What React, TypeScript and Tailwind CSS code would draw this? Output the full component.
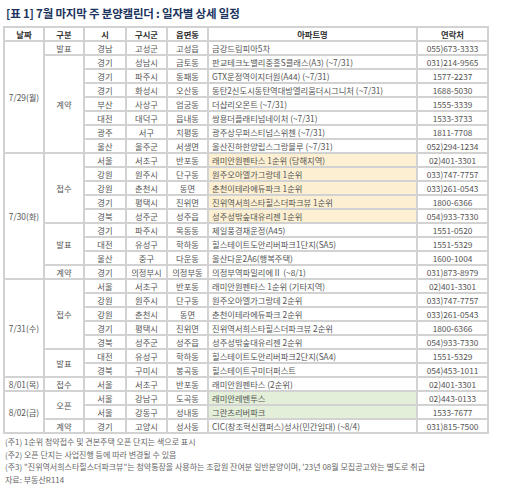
import React from 'react';

type Row = {
  si: string;
  gu: string;
  dong: string;
  apt: string;
  tel: string;
  hl?: 'y' | 'g';
};

type Group = { kind: string; rows: Row[] };
type Day = { date: string; groups: Group[] };

const DAYS: Day[] = [
  {
    date: '7/29(월)',
    groups: [
      { kind: '발표', rows: [{ si: '경남', gu: '고성군', dong: '고성읍', apt: '금강드림피아5차', tel: '055)673-3333' }] },
      {
        kind: '계약',
        rows: [
          { si: '경기', gu: '성남시', dong: '금토동', apt: '판교테크노밸리중흥S클래스(A3) (~7/31)', tel: '031)214-9565' },
          { si: '경기', gu: '파주시', dong: '동패동', apt: 'GTX운정역이지더원(A44) (~7/31)', tel: '1577-2237' },
          { si: '경기', gu: '화성시', dong: '오산동', apt: '동탄2신도시동탄역대방엘리움더시그니처 (~7/31)', tel: '1688-5030' },
          { si: '부산', gu: '사상구', dong: '엄궁동', apt: '더샵리오몬트 (~7/31)', tel: '1555-3339' },
          { si: '대전', gu: '대덕구', dong: '읍내동', apt: '쌍용더플래티넘네이처 (~7/31)', tel: '1533-3733' },
          { si: '광주', gu: '서구', dong: '치평동', apt: '광주상무퍼스티넘스위첸 (~7/31)', tel: '1811-7708' },
          { si: '울산', gu: '울주군', dong: '서생면', apt: '울산진하한양립스그랑블루 (~7/31)', tel: '052)294-1234' },
        ],
      },
    ],
  },
  {
    date: '7/30(화)',
    groups: [
      {
        kind: '접수',
        rows: [
          { si: '서울', gu: '서초구', dong: '반포동', apt: '래미안원펜타스 1순위 (당해지역)', tel: '02)401-3301', hl: 'y' },
          { si: '강원', gu: '원주시', dong: '단구동', apt: '원주오아엘가그랑데 1순위', tel: '033)747-7757', hl: 'y' },
          { si: '강원', gu: '춘천시', dong: '동면', apt: '춘천이테라에듀파크 1순위', tel: '033)261-0543', hl: 'y' },
          { si: '경기', gu: '평택시', dong: '진위면', apt: '진위역서희스타힐스더파크뷰 1순위', tel: '1800-6366', hl: 'y' },
          { si: '경북', gu: '성주군', dong: '성주읍', apt: '성주성밖숲대유리젠 1순위', tel: '054)933-7330', hl: 'y' },
        ],
      },
      {
        kind: '발표',
        rows: [
          { si: '경기', gu: '파주시', dong: '목동동', apt: '제일풍경채운정(A45)', tel: '1551-0520' },
          { si: '대전', gu: '유성구', dong: '학하동', apt: '힐스테이트도안리버파크1단지(SA5)', tel: '1551-5329' },
          { si: '울산', gu: '중구', dong: '다운동', apt: '울산다운2A6(행복주택)', tel: '1600-1004' },
        ],
      },
      { kind: '계약', rows: [{ si: '경기', gu: '의정부시', dong: '의정부동', apt: '의정부역파밀리에Ⅱ (~8/1)', tel: '031)873-8979' }] },
    ],
  },
  {
    date: '7/31(수)',
    groups: [
      {
        kind: '접수',
        rows: [
          { si: '서울', gu: '서초구', dong: '반포동', apt: '래미안원펜타스 1순위 (기타지역)', tel: '02)401-3301' },
          { si: '강원', gu: '원주시', dong: '단구동', apt: '원주오아엘가그랑데 2순위', tel: '033)747-7757' },
          { si: '강원', gu: '춘천시', dong: '동면', apt: '춘천이테라에듀파크 2순위', tel: '033)261-0543' },
          { si: '경기', gu: '평택시', dong: '진위면', apt: '진위역서희스타힐스더파크뷰 2순위', tel: '1800-6366' },
          { si: '경북', gu: '성주군', dong: '성주읍', apt: '성주성밖숲대유리젠 2순위', tel: '054)933-7330' },
        ],
      },
      {
        kind: '발표',
        rows: [
          { si: '대전', gu: '유성구', dong: '학하동', apt: '힐스테이트도안리버파크2단지(SA4)', tel: '1551-5329' },
          { si: '경북', gu: '구미시', dong: '봉곡동', apt: '힐스테이트구미더퍼스트', tel: '054)453-1011' },
        ],
      },
    ],
  },
  {
    date: '8/01(목)',
    groups: [
      { kind: '접수', rows: [{ si: '서울', gu: '서초구', dong: '반포동', apt: '래미안원펜타스 (2순위)', tel: '02)401-3301' }] },
    ],
  },
  {
    date: '8/02(금)',
    groups: [
      {
        kind: '오픈',
        rows: [
          { si: '서울', gu: '강남구', dong: '도곡동', apt: '래미안레벤투스', tel: '02)443-0133', hl: 'g' },
          { si: '서울', gu: '강동구', dong: '성내동', apt: '그란츠리버파크', tel: '1533-7677', hl: 'g' },
        ],
      },
      { kind: '계약', rows: [{ si: '경기', gu: '고양시', dong: '성사동', apt: 'CIC(창조혁신캠퍼스)성사(민간임대) (~8/4)', tel: '031)815-7500' }] },
    ],
  },
];

const cell = 'border border-[#d2d2d2] h-[14px] p-0 text-center align-middle whitespace-nowrap overflow-hidden';

export default function App() {
  return (
    <div
      className="w-[512px] h-[493px] bg-white pl-[3px] pt-[5px] text-[#555]"
      style={{ fontFamily: '"Noto Sans CJK KR", "Noto Sans", sans-serif' }}
    >
      <h1 className="pl-[3px] text-[11.5px] leading-[16px] font-bold text-[#1c3560] tracking-[-0.2px]">
        [표 1] 7월 마지막 주 분양캘린더 : 일자별 상세 일정
      </h1>

      <table className="mt-[5px] w-[485px] table-fixed border-separate border-spacing-0 border border-[#d2d2d2] text-[8.3px] leading-[12px]">
        <colgroup>
          <col className="w-[40px]" />
          <col className="w-[40px]" />
          <col className="w-[42px]" />
          <col className="w-[41px]" />
          <col className="w-[41px]" />
          <col className="w-[209px]" />
          <col className="w-[71px]" />
        </colgroup>
        <thead>
          <tr className="font-bold text-[#333]">
            <th className={cell}>날짜</th>
            <th className={cell}>구분</th>
            <th className={cell}>시</th>
            <th className={cell}>구시군</th>
            <th className={cell}>읍면동</th>
            <th className={cell}>아파트명</th>
            <th className={cell}>연락처</th>
          </tr>
        </thead>
        <tbody>
          {DAYS.map((day) => {
            const total = day.groups.reduce((n, g) => n + g.rows.length, 0);
            return day.groups.map((g, gi) =>
              g.rows.map((r, ri) => (
                <tr key={`${day.date}-${gi}-${ri}`}>
                  {gi === 0 && ri === 0 && (
                    <td className={cell} rowSpan={total}>
                      {day.date}
                    </td>
                  )}
                  {ri === 0 && (
                    <td className={cell} rowSpan={g.rows.length}>
                      {g.kind}
                    </td>
                  )}
                  <td className={cell}>{r.si}</td>
                  <td className={cell}>{r.gu}</td>
                  <td className={cell}>{r.dong}</td>
                  <td
                    className={`${cell} !text-left pl-[3px] ${
                      r.hl === 'y' ? 'bg-[#fdf0d2]' : r.hl === 'g' ? 'bg-[#e3efd9]' : ''
                    }`}
                  >
                    {r.apt}
                  </td>
                  <td className={cell}>{r.tel}</td>
                </tr>
              ))
            );
          })}
        </tbody>
      </table>

      <div className="mt-[2px] pl-[2px] text-[8px] leading-[12.5px] text-[#666]">
        <p>(주1) 1순위 청약접수 및 견본주택 오픈 단지는 색으로 표시</p>
        <p>(주2) 오픈 단지는 사업진행 등에 따라 변경될 수 있음</p>
        <p>(주3) "진위역서희스타힐스더파크뷰"는 청약통장을 사용하는 조합원 잔여분 일반분양이며, '23년 08월 모집공고와는 별도로 취급</p>
        <p>자료: 부동산R114</p>
      </div>
    </div>
  );
}
